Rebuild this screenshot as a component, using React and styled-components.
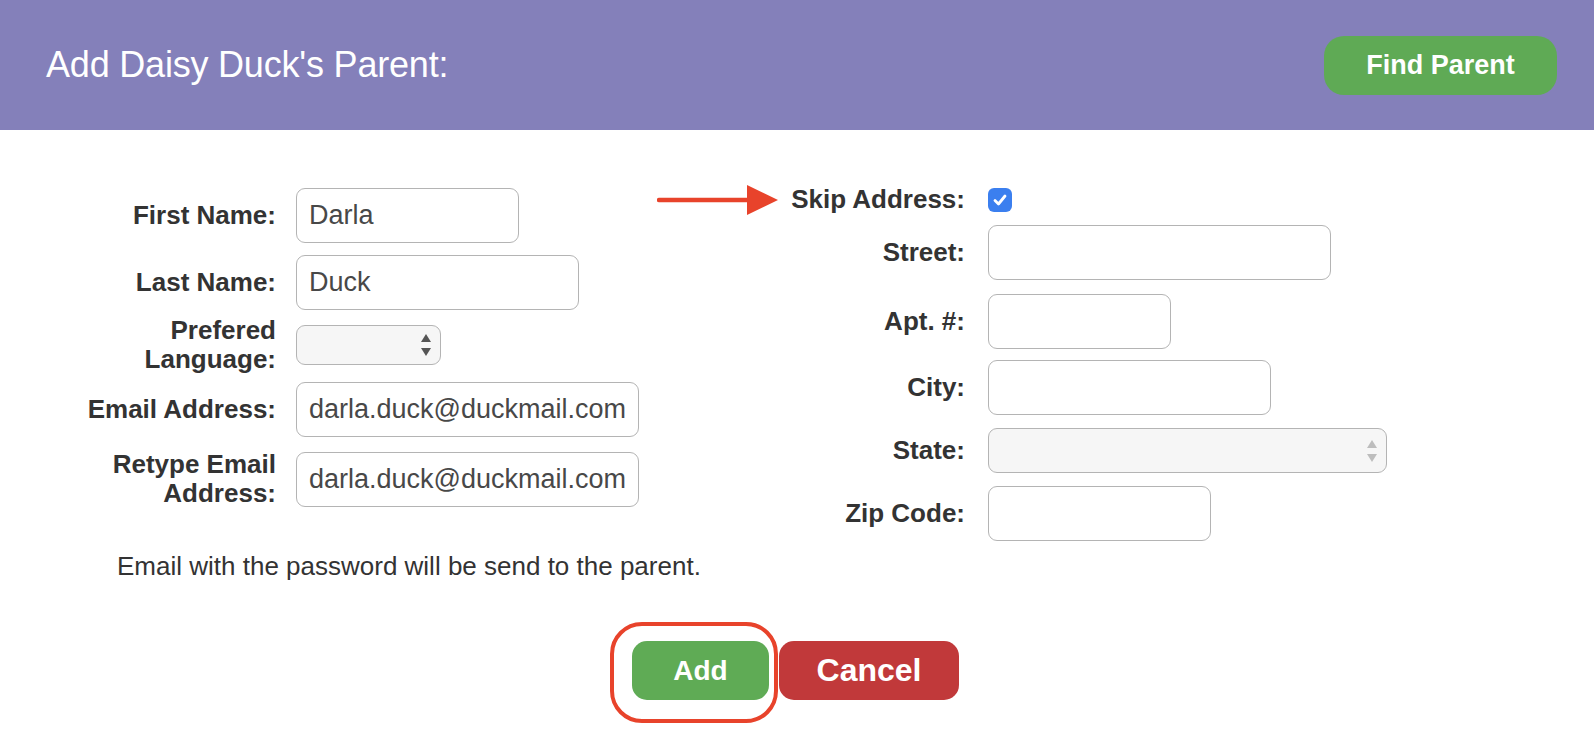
import React from 'react'
import styled, { createGlobalStyle } from 'styled-components'

const GlobalStyle = createGlobalStyle`
  html, body {
    margin: 0;
    padding: 0;
    background: #fff;
  }
  body {
    font-family: "Liberation Sans", Arial, Helvetica, sans-serif;
    color: #333;
  }
  * { box-sizing: border-box; }
`

const Arrows = ({ color }) => (
  <svg width="12" height="24" viewBox="0 0 12 24">
    <polygon points="6,1 11,9 1,9" fill={color} />
    <polygon points="6,23 11,15 1,15" fill={color} />
  </svg>
)

const Check = () => (
  <svg width="16" height="16" viewBox="0 0 16 16">
    <path d="M3 8.5 L6.5 12 L13 4" fill="none" stroke="#fff" strokeWidth="2.8" strokeLinecap="round" strokeLinejoin="round" />
  </svg>
)

const PointerArrow = () => (
  <svg width="122" height="30" viewBox="0 0 122 30">
    <path d="M2 15 L94 15" stroke="#e8432b" strokeWidth="4.5" strokeLinecap="round" />
    <polygon points="90,0 121,15 90,30" fill="#e8432b" />
  </svg>
)

const leftRows = [
  { label: 'First Name:', value: 'Darla', w: 223, h: 68 },
  { label: 'Last Name:', value: 'Duck', w: 283, h: 67 },
  { label: ['Prefered', 'Language:'], select: true, w: 145, sh: 40, arrow: '#555', h: 58 },
  { label: 'Email Address:', value: 'darla.duck@duckmail.com', w: 343, h: 71 },
  { label: ['Retype Email', 'Address:'], value: 'darla.duck@duckmail.com', w: 343, h: 68 },
]

const rightRows = [
  { label: 'Street:', value: '', w: 343, h: 68 },
  { label: 'Apt. #:', value: '', w: 183, h: 70 },
  { label: 'City:', value: '', w: 283, h: 63 },
  { label: 'State:', select: true, w: 399, sh: 45, arrow: '#bdbdbd', h: 63 },
  { label: 'Zip Code:', value: '', w: 223, h: 63 },
]

const renderLabel = (label) =>
  Array.isArray(label) ? label.map((l) => <div key={l}>{l}</div>) : label

const FieldRow = ({ row, gap }) => (
  <Row $h={row.h}>
    <Label>{renderLabel(row.label)}</Label>
    <Control $gap={gap}>
      {row.select ? (
        <SelectBox $w={row.w} $h={row.sh}>
          <Arrows color={row.arrow} />
        </SelectBox>
      ) : (
        <TextInput $w={row.w} value={row.value} readOnly />
      )}
    </Control>
  </Row>
)

const App = () => {
  return (
    <Page>
      <GlobalStyle />
      <Header>
        <Title>Add Daisy Duck's Parent:</Title>
        <FindButton>Find Parent</FindButton>
      </Header>

      <Form>
        <Column $left={86}>
          {leftRows.map((r) => (
            <FieldRow key={String(r.label)} row={r} gap={20} />
          ))}
        </Column>

        <Column $left={136}>
          <Row $h={37}>
            <Label>
              <ArrowHold>
                <PointerArrow />
              </ArrowHold>
              Skip Address:
            </Label>
            <Control $gap={23}>
              <CheckBox>
                <Check />
              </CheckBox>
            </Control>
          </Row>
          {rightRows.map((r) => (
            <FieldRow key={r.label} row={r} gap={23} />
          ))}
        </Column>
      </Form>

      <Note>Email with the password will be send to the parent.</Note>

      <Actions>
        <Highlight>
          <ActionButton $bg="#5fab55" $w={137} $size={28}>Add</ActionButton>
          <Ring />
        </Highlight>
        <ActionButton $bg="#c1393a" $w={180} $size={32}>Cancel</ActionButton>
      </Actions>
    </Page>
  )
}

export default App

const Page = styled.div`
width: 100%;
min-height: 752px;
background: #fff;
`
const Header = styled.div`
height: 130px;
margin-right: 2px;
background: #8480ba;
display: flex;
justify-content: space-between;
align-items: center;
padding: 0 37px 0 46px;
`
const Title = styled.h1`
margin: 0;
font-size: 36px;
font-weight: normal;
color: #fff;
letter-spacing: -0.2px;
`
const FindButton = styled.button`
width: 233px;
height: 59px;
border: none;
border-radius: 20px;
background: #5faa55;
color: #fff;
font-family: "Liberation Sans", Arial, sans-serif;
font-weight: 700;
font-size: 27px;
cursor: pointer;
`
const Form = styled.div`
display: flex;
padding-top: 51px;
`
const Column = styled.div`
display: flex;
flex-direction: column;
padding-left: ${(p) => p.$left}px;
`
const Row = styled.div`
display: flex;
align-items: center;
height: ${(p) => p.$h}px;
`
const Label = styled.div`
position: relative;
width: 190px;
text-align: right;
font-weight: 700;
font-size: 26px;
line-height: 29px;
color: #333;
`
const ArrowHold = styled.div`
position: absolute;
left: -118px;
top: 0;
height: 30px;
display: flex;
`
const Control = styled.div`
display: flex;
align-items: center;
padding-left: ${(p) => p.$gap}px;
`
const TextInput = styled.input`
width: ${(p) => p.$w}px;
height: 55px;
padding: 0 12px;
border: 1.5px solid #b4b4b4;
border-radius: 9px;
background: #fff;
font-family: "Liberation Sans", Arial, sans-serif;
font-size: 27px;
color: #484848;
outline: none;
`
const SelectBox = styled.div`
width: ${(p) => p.$w}px;
height: ${(p) => p.$h}px;
border: 1.5px solid #b4b4b4;
border-radius: 9px;
background: #f6f6f6;
display: flex;
align-items: center;
justify-content: flex-end;
padding-right: 8px;
`
const CheckBox = styled.div`
width: 24px;
height: 24px;
border-radius: 6px;
background: #3b7fef;
display: flex;
align-items: center;
justify-content: center;
`
const Note = styled.p`
margin: 6px 0 0 117px;
font-size: 26px;
line-height: 30px;
color: #333;
`
const Actions = styled.div`
display: flex;
justify-content: center;
gap: 10px;
margin-top: 60px;
padding-right: 5px;
`
const Highlight = styled.div`
position: relative;
display: flex;
`
const Ring = styled.div`
position: absolute;
left: -22px;
top: -19px;
width: 168px;
height: 101px;
border: 4px solid #e8432b;
border-radius: 32px;
pointer-events: none;
`
const ActionButton = styled.button`
width: ${(p) => p.$w}px;
height: 59px;
border: none;
border-radius: 15px;
background: ${(p) => p.$bg};
color: #fff;
font-family: "Liberation Sans", Arial, sans-serif;
font-weight: 700;
font-size: ${(p) => p.$size}px;
cursor: pointer;
`
